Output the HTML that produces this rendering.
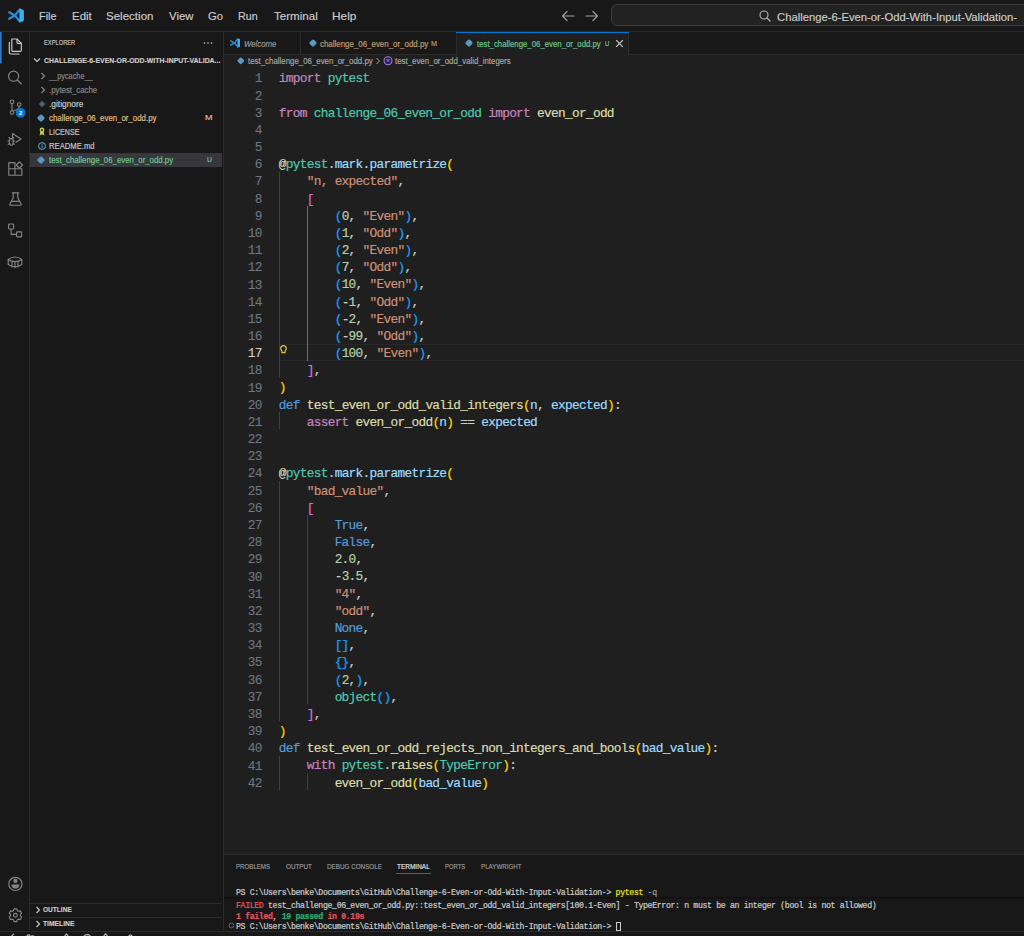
<!DOCTYPE html>
<html><head><meta charset="utf-8"><style>*{margin:0;padding:0;box-sizing:border-box}
html,body{width:1024px;height:936px;overflow:hidden;background:#181818;font-family:"Liberation Sans",sans-serif;color:#cccccc}
.a{position:absolute}
.box{position:absolute}
.t{position:absolute;white-space:pre;transform-origin:0 50%;-webkit-text-stroke:0.15px}
.code{position:absolute;left:278.8px;-webkit-text-stroke:0.2px;font-family:"Liberation Mono",monospace;font-size:12.8px;letter-spacing:-0.70px;margin-top:1.6px;line-height:17.18px;height:17.18px;color:#cccccc;white-space:pre}
.ln{position:absolute;left:223px;width:38.7px;text-align:right;font-family:"Liberation Mono",monospace;font-size:12.8px;letter-spacing:-0.70px;margin-top:1.7px;-webkit-text-stroke:0.1px;line-height:17.18px;color:#6e7681}
.k{color:#C586C0}.d{color:#569CD6}.m{color:#4EC9B0}.f{color:#DCDCAA}.s{color:#CE9178}.n{color:#B5CEA8}.v{color:#9CDCFE}
.b1{color:#FFD700}.b2{color:#DA70D6}.b3{color:#179FFF}
.guide{position:absolute;width:1px;background:#404040}
.term{position:absolute;left:236px;-webkit-text-stroke:0.2px;font-family:"Liberation Mono",monospace;font-size:8.2px;letter-spacing:-0.34px;line-height:11px;color:#cccccc;white-space:pre}
</style></head><body>
<div class="box" style="left:0;top:0;width:1024px;height:31px;background:#181818"></div>
<div class="box" style="left:0;top:31px;width:1024px;height:1px;background:#2b2b2b"></div>
<svg class="a" style="left:0;top:0" width="32" height="32" viewBox="0 0 32 32"><path d="M9.2 12.3 L14.8 15.5 L19.8 21.3 M9.2 18.7 L14.8 15.5 L19.8 9.6" fill="none" stroke="#2a8ad8" stroke-width="2.3" stroke-linecap="round" stroke-linejoin="round"/><path d="M19.4 8.3 L23.4 10.1 Q23.9 10.4 23.9 11 V20 Q23.9 20.6 23.4 20.9 L19.4 22.7 Z" fill="#3cb0f0"/></svg>
<svg class="a" style="left:556px;top:8px" width="48" height="16" viewBox="0 0 48 16"><path d="M18 8 H6.5 M11 3.5 L6.5 8 L11 12.5 M30 8 H41.5 M37 3.5 L41.5 8 L37 12.5" fill="none" stroke="#9d9d9d" stroke-width="1.2" stroke-linecap="round" stroke-linejoin="round"/></svg>
<div class="box" style="left:611px;top:4px;width:440px;height:22px;border:1px solid #3c3c3c;border-radius:6px;background:#222222"></div>
<svg class="a" style="left:758px;top:9px" width="14" height="14" viewBox="0 0 14 14"><circle cx="6" cy="6" r="4" fill="none" stroke="#bbbbbb" stroke-width="1.1"/><path d="M8.9 8.9 L12 12" stroke="#bbbbbb" stroke-width="1.2" stroke-linecap="round"/></svg>
<div class="box" style="left:29px;top:32px;width:1px;height:898px;background:#2b2b2b"></div>
<svg class="a" style="left:0;top:0" width="30" height="936" viewBox="0 0 30 936">
<rect x="0" y="32" width="1.6" height="31.5" fill="#2f7fc8"/>
<path d="M11.8 39 H17 L21.3 43.3 V50.5 Q21.3 51.4 20.4 51.4 H12.7 Q11.8 51.4 11.8 50.5 Z" fill="none" stroke="#cccccc" stroke-width="1.15" stroke-linejoin="round" stroke-linecap="round"/>
<path d="M17 39.2 V42.5 Q17 43.3 17.8 43.3 H21.1" fill="none" stroke="#cccccc" stroke-width="1.15" stroke-linejoin="round" stroke-linecap="round"/>
<path d="M9.3 42.3 V52.5 Q9.3 54 10.8 54 H19.2" fill="none" stroke="#cccccc" stroke-width="1.15" stroke-linejoin="round" stroke-linecap="round"/>
<circle cx="13.6" cy="76.2" r="5.1" fill="none" stroke="#858585" stroke-width="1.15" stroke-linejoin="round" stroke-linecap="round"/>
<path d="M17.3 80 L21.4 84" fill="none" stroke="#858585" stroke-width="1.15" stroke-linejoin="round" stroke-linecap="round"/>
<circle cx="12" cy="101.8" r="1.8" fill="none" stroke="#858585" stroke-width="1.15" stroke-linejoin="round" stroke-linecap="round"/>
<circle cx="12" cy="112.6" r="1.8" fill="none" stroke="#858585" stroke-width="1.15" stroke-linejoin="round" stroke-linecap="round"/>
<circle cx="19.2" cy="104.6" r="1.8" fill="none" stroke="#858585" stroke-width="1.15" stroke-linejoin="round" stroke-linecap="round"/>
<path d="M12 103.6 V110.8 M19.2 106.4 Q19.2 109.5 13.6 110.5" fill="none" stroke="#858585" stroke-width="1.15" stroke-linejoin="round" stroke-linecap="round"/>
<circle cx="20.6" cy="112.8" r="4.9" fill="#0078d4"/>
<text x="20.7" y="115" font-family="Liberation Sans" font-size="6" font-weight="bold" fill="#ffffff" text-anchor="middle">2</text>
<path d="M12.5 133.5 V137.5 M12.5 133.5 L21 139 L16 142.3" fill="none" stroke="#858585" stroke-width="1.15" stroke-linejoin="round" stroke-linecap="round"/>
<path d="M9.5 140.2 Q9.5 138.6 11.3 138.6 Q13.1 138.6 13.1 140.2 V143 Q13.1 145.2 11.3 145.2 Q9.5 145.2 9.5 143 Z" fill="none" stroke="#858585" stroke-width="1.15" stroke-linejoin="round" stroke-linecap="round"/>
<path d="M8 141 H9.5 M13.1 141 H14.6 M8.2 144.2 L9.6 143.4 M14.4 144.2 L13 143.4 M9.8 138.6 L9 137.4 M12.8 138.6 L13.6 137.4" fill="none" stroke="#858585" stroke-width="1.15" stroke-linejoin="round" stroke-linecap="round"/>
<path d="M8.8 162.6 H14.9 V168.7 H21.8 V175.2 H8.8 Z M14.9 168.7 H8.8 M14.9 168.7 V175.2" fill="none" stroke="#858585" stroke-width="1.15" stroke-linejoin="round" stroke-linecap="round"/>
<path d="M19.4 161.8 L22.6 165 L19.4 168.2 L16.2 165 Z" fill="none" stroke="#858585" stroke-width="1.15" stroke-linejoin="round" stroke-linecap="round"/>
<path d="M12.2 192.8 H18.8 M13.2 192.8 V197.8 L9.9 204 Q9.5 205.2 10.8 205.2 H20.2 Q21.5 205.2 21.1 204 L17.8 197.8 V192.8 M11.4 201.3 H19.6" fill="none" stroke="#858585" stroke-width="1.15" stroke-linejoin="round" stroke-linecap="round"/>
<rect x="8.6" y="224" width="5" height="5" rx="0.8" fill="none" stroke="#858585" stroke-width="1.15" stroke-linejoin="round" stroke-linecap="round"/>
<rect x="16.6" y="231.9" width="5" height="5" rx="0.8" fill="none" stroke="#858585" stroke-width="1.15" stroke-linejoin="round" stroke-linecap="round"/>
<path d="M11.1 229 V234.4 H16.6" fill="none" stroke="#858585" stroke-width="1.15" stroke-linejoin="round" stroke-linecap="round"/>
<path d="M8.2 259.4 Q15 254.6 21.8 259.4 V264.6 Q15 269.2 8.2 264.6 Z M8.2 259.4 Q15 263.6 21.8 259.4 M12 261.6 V267 M15 262.2 V267.7 M18 261.6 V267" fill="none" stroke="#858585" stroke-width="1.15" stroke-linejoin="round" stroke-linecap="round"/>
<circle cx="15.4" cy="883.9" r="6.6" fill="none" stroke="#858585" stroke-width="1.15" stroke-linejoin="round" stroke-linecap="round"/>
<circle cx="15.4" cy="880.9" r="2.1" fill="#858585"/>
<path d="M11.4 884.6 H19.4 Q19.2 888.6 15.4 888.8 Q11.6 888.6 11.4 884.6 Z" fill="#858585"/>
<path d="M13.41 910.72 L14.05 908.84 L16.75 908.84 L17.39 910.72 L18.28 911.24 L20.23 910.85 L21.58 913.19 L20.27 914.69 L20.27 915.71 L21.58 917.21 L20.23 919.55 L18.28 919.16 L17.39 919.68 L16.75 921.56 L14.05 921.56 L13.41 919.68 L12.52 919.16 L10.57 919.55 L9.22 917.21 L10.53 915.71 L10.53 914.69 L9.22 913.19 L10.57 910.85 L12.52 911.24 Z" fill="none" stroke="#858585" stroke-width="1.15" stroke-linejoin="round" stroke-linecap="round"/>
<circle cx="15.4" cy="915.2" r="1.9" fill="none" stroke="#858585" stroke-width="1.15" stroke-linejoin="round" stroke-linecap="round"/>
</svg>
<div class="box" style="left:223px;top:32px;width:1px;height:898px;background:#2b2b2b"></div>
<svg class="a" style="left:202px;top:40px" width="12" height="6" viewBox="0 0 12 6"><circle cx="2.5" cy="3" r="0.8" fill="#cccccc"/><circle cx="6" cy="3" r="0.8" fill="#cccccc"/><circle cx="9.5" cy="3" r="0.8" fill="#cccccc"/></svg>
<svg class="a" style="left:33.0px;top:56.3px" width="8" height="8" viewBox="0 0 8 8"><path d="M1 2.5 L4 5.5 L7 2.5" fill="none" stroke="#cccccc" stroke-width="1.1"/></svg>
<div class="box" style="left:30px;top:152.72px;width:192px;height:14.05px;background:#37373d"></div>
<svg class="a" style="left:39.4px;top:71.5px" width="8" height="8" viewBox="0 0 8 8"><path d="M2.5 1 L5.5 4 L2.5 7" fill="none" stroke="#8c8c8c" stroke-width="1.1"/></svg>
<svg class="a" style="left:39.4px;top:85.5px" width="8" height="8" viewBox="0 0 8 8"><path d="M2.5 1 L5.5 4 L2.5 7" fill="none" stroke="#8c8c8c" stroke-width="1.1"/></svg>
<svg class="a" style="left:37.80px;top:99.55px" width="8" height="8" viewBox="0 0 8 8"><path d="M4 0.5 L7.5 4 L4 7.5 L0.5 4 Z" fill="#41535b"/><path d="M4 2.2 L5.8 4 L4 5.8 L2.2 4 Z" fill="#5b6b72"/></svg>
<svg class="a" style="left:37.30px;top:113.60px" width="8.00" height="8.00" viewBox="0 0 16 16"><path d="M8 0.8 Q9.2 0.8 10.8 2.6 L13.4 5.2 Q15.2 6.8 15.2 8 Q15.2 9.2 13.4 10.8 L10.8 13.4 Q9.2 15.2 8 15.2 Q6.8 15.2 5.2 13.4 L2.6 10.8 Q0.8 9.2 0.8 8 Q0.8 6.8 2.6 5.2 L5.2 2.6 Q6.8 0.8 8 0.8 Z" fill="#5a9cc6"/><circle cx="6" cy="5.6" r="0.9" fill="#2d5670"/><circle cx="10" cy="10.4" r="0.9" fill="#2d5670"/></svg>
<svg class="a" style="left:37.70px;top:127.35px" width="8" height="9" viewBox="0 0 8 9"><circle cx="4" cy="3" r="2.4" fill="#cbcb41"/><path d="M2.4 4.6 L1.6 8.6 L4 7.2 L6.4 8.6 L5.6 4.6" fill="#cbcb41"/><circle cx="4" cy="3" r="1" fill="#181818"/></svg>
<svg class="a" style="left:37.60px;top:141.70px" width="8" height="8" viewBox="0 0 8 8"><circle cx="4" cy="4" r="3.3" fill="none" stroke="#519aba" stroke-width="1.1"/><path d="M4 3.4 V6" stroke="#519aba" stroke-width="1.2"/><circle cx="4" cy="2.2" r="0.6" fill="#519aba"/></svg>
<svg class="a" style="left:37.30px;top:155.75px" width="8.00" height="8.00" viewBox="0 0 16 16"><path d="M8 0.8 Q9.2 0.8 10.8 2.6 L13.4 5.2 Q15.2 6.8 15.2 8 Q15.2 9.2 13.4 10.8 L10.8 13.4 Q9.2 15.2 8 15.2 Q6.8 15.2 5.2 13.4 L2.6 10.8 Q0.8 9.2 0.8 8 Q0.8 6.8 2.6 5.2 L5.2 2.6 Q6.8 0.8 8 0.8 Z" fill="#5a9cc6"/><circle cx="6" cy="5.6" r="0.9" fill="#2d5670"/><circle cx="10" cy="10.4" r="0.9" fill="#2d5670"/></svg>
<div class="box" style="left:30px;top:903px;width:192px;height:1px;background:#2b2b2b"></div>
<div class="box" style="left:30px;top:917px;width:192px;height:1px;background:#2b2b2b"></div>
<svg class="a" style="left:33.6px;top:906.0px" width="8" height="8" viewBox="0 0 8 8"><path d="M2.5 1 L5.5 4 L2.5 7" fill="none" stroke="#cccccc" stroke-width="1.1"/></svg>
<svg class="a" style="left:33.6px;top:920.0px" width="8" height="8" viewBox="0 0 8 8"><path d="M2.5 1 L5.5 4 L2.5 7" fill="none" stroke="#cccccc" stroke-width="1.1"/></svg>
<div class="box" style="left:224px;top:32px;width:800px;height:822px;background:#1f1f1f"></div>
<div class="box" style="left:224px;top:32px;width:800px;height:23px;background:#181818"></div>
<div class="box" style="left:224px;top:54px;width:800px;height:1px;background:#2b2b2b"></div>
<div class="box" style="left:300px;top:32px;width:1px;height:22px;background:#2b2b2b"></div>
<div class="box" style="left:456px;top:32px;width:173px;height:23px;background:#1f1f1f;border-left:1px solid #2b2b2b;border-right:1px solid #2b2b2b"></div>
<div class="box" style="left:456px;top:32px;width:173px;height:1px;background:#0078d4"></div>
<svg class="a" style="left:229.5px;top:38px" width="10.5" height="10.5" viewBox="8 8 16 16"><path d="M9.2 12.3 L14.8 15.5 L19.8 21.3 M9.2 18.7 L14.8 15.5 L19.8 9.6" fill="none" stroke="#2a8ad8" stroke-width="2.3" stroke-linecap="round" stroke-linejoin="round"/><path d="M19.4 8.3 L23.4 10.1 Q23.9 10.4 23.9 11 V20 Q23.9 20.6 23.4 20.9 L19.4 22.7 Z" fill="#3cb0f0"/></svg>
<svg class="a" style="left:309.00px;top:39.00px" width="8.00" height="8.00" viewBox="0 0 16 16"><path d="M8 0.8 Q9.2 0.8 10.8 2.6 L13.4 5.2 Q15.2 6.8 15.2 8 Q15.2 9.2 13.4 10.8 L10.8 13.4 Q9.2 15.2 8 15.2 Q6.8 15.2 5.2 13.4 L2.6 10.8 Q0.8 9.2 0.8 8 Q0.8 6.8 2.6 5.2 L5.2 2.6 Q6.8 0.8 8 0.8 Z" fill="#5a9cc6"/><circle cx="6" cy="5.6" r="0.9" fill="#2d5670"/><circle cx="10" cy="10.4" r="0.9" fill="#2d5670"/></svg>
<svg class="a" style="left:465.00px;top:39.00px" width="8.00" height="8.00" viewBox="0 0 16 16"><path d="M8 0.8 Q9.2 0.8 10.8 2.6 L13.4 5.2 Q15.2 6.8 15.2 8 Q15.2 9.2 13.4 10.8 L10.8 13.4 Q9.2 15.2 8 15.2 Q6.8 15.2 5.2 13.4 L2.6 10.8 Q0.8 9.2 0.8 8 Q0.8 6.8 2.6 5.2 L5.2 2.6 Q6.8 0.8 8 0.8 Z" fill="#5a9cc6"/><circle cx="6" cy="5.6" r="0.9" fill="#2d5670"/><circle cx="10" cy="10.4" r="0.9" fill="#2d5670"/></svg>
<svg class="a" style="left:615px;top:38.5px" width="9" height="9" viewBox="0 0 9 9"><path d="M1.2 1.2 L7.8 7.8 M7.8 1.2 L1.2 7.8" stroke="#cccccc" stroke-width="1.2"/></svg>
<svg class="a" style="left:236.60px;top:57.00px" width="7.60" height="7.60" viewBox="0 0 16 16"><path d="M8 0.8 Q9.2 0.8 10.8 2.6 L13.4 5.2 Q15.2 6.8 15.2 8 Q15.2 9.2 13.4 10.8 L10.8 13.4 Q9.2 15.2 8 15.2 Q6.8 15.2 5.2 13.4 L2.6 10.8 Q0.8 9.2 0.8 8 Q0.8 6.8 2.6 5.2 L5.2 2.6 Q6.8 0.8 8 0.8 Z" fill="#5a9cc6"/><circle cx="6" cy="5.6" r="0.9" fill="#2d5670"/><circle cx="10" cy="10.4" r="0.9" fill="#2d5670"/></svg>
<svg class="a" style="left:375px;top:57px" width="6" height="8" viewBox="0 0 6 8"><path d="M1.5 1 L4.5 4 L1.5 7" fill="none" stroke="#a9a9a9" stroke-width="1"/></svg>
<svg class="a" style="left:383px;top:56.3px" width="10" height="10" viewBox="0 0 10 10"><circle cx="5" cy="4.7" r="4" fill="#2e1f5e" stroke="#a07ad0" stroke-width="1.1"/><path d="M3.2 3.3 H6.8 L5 6.6 Z" fill="#8a6cc0"/></svg>
<div class="a" style="left:279px;top:343.54px;width:745px;height:17.18px;border:1px solid #282828;border-right:none"></div>
<div class="guide" style="left:278.80px;top:171.74px;height:206.16px;"></div>
<div class="guide" style="left:306.72px;top:206.10px;height:154.62px;background:#707070"></div>
<div class="guide" style="left:278.80px;top:412.26px;height:17.18px;"></div>
<div class="guide" style="left:278.80px;top:480.98px;height:240.52px;"></div>
<div class="guide" style="left:306.72px;top:515.34px;height:188.98px;"></div>
<div class="guide" style="left:278.80px;top:755.86px;height:34.36px;"></div>
<div class="guide" style="left:306.72px;top:773.04px;height:17.18px;"></div>
<div class="ln" style="top:68.66px;color:#6e7681">1</div>
<div class="code" style="top:68.66px"><span class="k">import</span> <span class="m">pytest</span></div>
<div class="ln" style="top:85.84px;color:#6e7681">2</div>
<div class="ln" style="top:103.02px;color:#6e7681">3</div>
<div class="code" style="top:103.02px"><span class="k">from</span> <span class="m">challenge_06_even_or_odd</span> <span class="k">import</span> <span class="f">even_or_odd</span></div>
<div class="ln" style="top:120.20px;color:#6e7681">4</div>
<div class="ln" style="top:137.38px;color:#6e7681">5</div>
<div class="ln" style="top:154.56px;color:#6e7681">6</div>
<div class="code" style="top:154.56px"><span class="f">@</span><span class="m">pytest</span>.<span class="v">mark</span>.<span class="v">parametrize</span><span class="b1">(</span></div>
<div class="ln" style="top:171.74px;color:#6e7681">7</div>
<div class="code" style="top:171.74px">    <span class="s">"n, expected"</span>,</div>
<div class="ln" style="top:188.92px;color:#6e7681">8</div>
<div class="code" style="top:188.92px">    <span class="b2">[</span></div>
<div class="ln" style="top:206.10px;color:#6e7681">9</div>
<div class="code" style="top:206.10px">        <span class="b3">(</span><span class="n">0</span>, <span class="s">"Even"</span><span class="b3">)</span>,</div>
<div class="ln" style="top:223.28px;color:#6e7681">10</div>
<div class="code" style="top:223.28px">        <span class="b3">(</span><span class="n">1</span>, <span class="s">"Odd"</span><span class="b3">)</span>,</div>
<div class="ln" style="top:240.46px;color:#6e7681">11</div>
<div class="code" style="top:240.46px">        <span class="b3">(</span><span class="n">2</span>, <span class="s">"Even"</span><span class="b3">)</span>,</div>
<div class="ln" style="top:257.64px;color:#6e7681">12</div>
<div class="code" style="top:257.64px">        <span class="b3">(</span><span class="n">7</span>, <span class="s">"Odd"</span><span class="b3">)</span>,</div>
<div class="ln" style="top:274.82px;color:#6e7681">13</div>
<div class="code" style="top:274.82px">        <span class="b3">(</span><span class="n">10</span>, <span class="s">"Even"</span><span class="b3">)</span>,</div>
<div class="ln" style="top:292.00px;color:#6e7681">14</div>
<div class="code" style="top:292.00px">        <span class="b3">(</span>-<span class="n">1</span>, <span class="s">"Odd"</span><span class="b3">)</span>,</div>
<div class="ln" style="top:309.18px;color:#6e7681">15</div>
<div class="code" style="top:309.18px">        <span class="b3">(</span>-<span class="n">2</span>, <span class="s">"Even"</span><span class="b3">)</span>,</div>
<div class="ln" style="top:326.36px;color:#6e7681">16</div>
<div class="code" style="top:326.36px">        <span class="b3">(</span>-<span class="n">99</span>, <span class="s">"Odd"</span><span class="b3">)</span>,</div>
<div class="ln" style="top:343.54px;color:#cccccc">17</div>
<div class="code" style="top:343.54px">        <span class="b3">(</span><span class="n">100</span>, <span class="s">"Even"</span><span class="b3">)</span>,</div>
<div class="ln" style="top:360.72px;color:#6e7681">18</div>
<div class="code" style="top:360.72px">    <span class="b2">]</span>,</div>
<div class="ln" style="top:377.90px;color:#6e7681">19</div>
<div class="code" style="top:377.90px"><span class="b1">)</span></div>
<div class="ln" style="top:395.08px;color:#6e7681">20</div>
<div class="code" style="top:395.08px"><span class="d">def</span> <span class="f">test_even_or_odd_valid_integers</span><span class="b1">(</span><span class="v">n</span>, <span class="v">expected</span><span class="b1">)</span>:</div>
<div class="ln" style="top:412.26px;color:#6e7681">21</div>
<div class="code" style="top:412.26px">    <span class="k">assert</span> <span class="f">even_or_odd</span><span class="b1">(</span><span class="v">n</span><span class="b1">)</span> == <span class="v">expected</span></div>
<div class="ln" style="top:429.44px;color:#6e7681">22</div>
<div class="ln" style="top:446.62px;color:#6e7681">23</div>
<div class="ln" style="top:463.80px;color:#6e7681">24</div>
<div class="code" style="top:463.80px"><span class="f">@</span><span class="m">pytest</span>.<span class="v">mark</span>.<span class="v">parametrize</span><span class="b1">(</span></div>
<div class="ln" style="top:480.98px;color:#6e7681">25</div>
<div class="code" style="top:480.98px">    <span class="s">"bad_value"</span>,</div>
<div class="ln" style="top:498.16px;color:#6e7681">26</div>
<div class="code" style="top:498.16px">    <span class="b2">[</span></div>
<div class="ln" style="top:515.34px;color:#6e7681">27</div>
<div class="code" style="top:515.34px">        <span class="d">True</span>,</div>
<div class="ln" style="top:532.52px;color:#6e7681">28</div>
<div class="code" style="top:532.52px">        <span class="d">False</span>,</div>
<div class="ln" style="top:549.70px;color:#6e7681">29</div>
<div class="code" style="top:549.70px">        <span class="n">2.0</span>,</div>
<div class="ln" style="top:566.88px;color:#6e7681">30</div>
<div class="code" style="top:566.88px">        -<span class="n">3.5</span>,</div>
<div class="ln" style="top:584.06px;color:#6e7681">31</div>
<div class="code" style="top:584.06px">        <span class="s">"4"</span>,</div>
<div class="ln" style="top:601.24px;color:#6e7681">32</div>
<div class="code" style="top:601.24px">        <span class="s">"odd"</span>,</div>
<div class="ln" style="top:618.42px;color:#6e7681">33</div>
<div class="code" style="top:618.42px">        <span class="d">None</span>,</div>
<div class="ln" style="top:635.60px;color:#6e7681">34</div>
<div class="code" style="top:635.60px">        <span class="b3">[]</span>,</div>
<div class="ln" style="top:652.78px;color:#6e7681">35</div>
<div class="code" style="top:652.78px">        <span class="b3">{}</span>,</div>
<div class="ln" style="top:669.96px;color:#6e7681">36</div>
<div class="code" style="top:669.96px">        <span class="b3">(</span><span class="n">2</span>,<span class="b3">)</span>,</div>
<div class="ln" style="top:687.14px;color:#6e7681">37</div>
<div class="code" style="top:687.14px">        <span class="m">object</span><span class="b3">()</span>,</div>
<div class="ln" style="top:704.32px;color:#6e7681">38</div>
<div class="code" style="top:704.32px">    <span class="b2">]</span>,</div>
<div class="ln" style="top:721.50px;color:#6e7681">39</div>
<div class="code" style="top:721.50px"><span class="b1">)</span></div>
<div class="ln" style="top:738.68px;color:#6e7681">40</div>
<div class="code" style="top:738.68px"><span class="d">def</span> <span class="f">test_even_or_odd_rejects_non_integers_and_bools</span><span class="b1">(</span><span class="v">bad_value</span><span class="b1">)</span>:</div>
<div class="ln" style="top:755.86px;color:#6e7681">41</div>
<div class="code" style="top:755.86px">    <span class="k">with</span> <span class="m">pytest</span>.<span class="f">raises</span><span class="b1">(</span><span class="m">TypeError</span><span class="b1">)</span>:</div>
<div class="ln" style="top:773.04px;color:#6e7681">42</div>
<div class="code" style="top:773.04px">        <span class="f">even_or_odd</span><span class="b1">(</span><span class="v">bad_value</span><span class="b1">)</span></div>
<svg class="a" style="left:280px;top:344.5px" width="7" height="9" viewBox="0 0 7 9"><path d="M3.5 0.7 C1.7 0.7 0.7 2 0.7 3.4 C0.7 4.6 1.6 5.3 2 6.2 V7.6 H5 V6.2 C5.4 5.3 6.3 4.6 6.3 3.4 C6.3 2 5.3 0.7 3.5 0.7 Z" fill="none" stroke="#e2c541" stroke-width="1.2"/></svg>
<div class="box" style="left:224px;top:854px;width:800px;height:76px;background:#181818;border-top:1px solid #2b2b2b"></div>
<div class="box" style="left:395.6px;top:872.5px;width:35.6px;height:1px;background:#0078d4"></div>
<div class="box" style="left:224px;top:897px;width:800px;height:1px;background:#101010"></div>
<div class="box" style="left:224px;top:898px;width:800px;height:2px;background:linear-gradient(#141414,#181818)"></div>
<div class="term" style="top:886.80px"><span style="color:#cccccc;">PS C:\Users\benke\Documents\GitHub\Challenge-6-Even-or-Odd-With-Input-Validation-&gt; </span><span style="color:#e5e510;">pytest</span><span style="color:#9d9d9d;"> -q</span></div>
<div class="term" style="top:899.50px"><span style="color:#e8555f;">FAILED</span><span style="color:#cccccc;"> test_challenge_06_even_or_odd.py::test_even_or_odd_valid_integers[100.1-Even] - TypeError: n must be an integer (bool is not allowed)</span></div>
<div class="term" style="top:911.10px"><span style="color:#e8555f;font-weight:bold">1 failed</span><span style="color:#cccccc;">, </span><span style="color:#2fae73;font-weight:bold">19 passed</span><span style="color:#e8555f;font-weight:bold"> in 0.19s</span></div>
<div class="term" style="top:921.10px"><span style="color:#cccccc;">PS C:\Users\benke\Documents\GitHub\Challenge-6-Even-or-Odd-With-Input-Validation-&gt; </span></div>
<div class="box" style="left:616.14px;top:922px;width:5px;height:9px;border:1px solid #cccccc"></div>
<svg class="a" style="left:227.5px;top:921.8px" width="7" height="7" viewBox="0 0 7 7"><circle cx="3.5" cy="3.5" r="2.4" fill="none" stroke="#6b6b6b" stroke-width="1"/></svg>
<div class="box" style="left:0;top:931px;width:1024px;height:5px;background:#181818;border-top:1px solid #2b2b2b"></div>
<svg class="a" style="left:0;top:926px" width="200" height="10" viewBox="0 926 200 10"><g fill="none" stroke="#bdbdbd" stroke-width="1.1"><path d="M14 933.6 L11.2 936.4"/><circle cx="28.6" cy="936.6" r="1.7"/><circle cx="32.6" cy="937.6" r="1.7"/><path d="M63.6 937.5 L66.4 933.8 L69.2 937.5"/><circle cx="87.2" cy="938.6" r="4"/><path d="M102.6 937.5 L105.6 933.6 L108.6 937.5"/><path d="M128.4 936.6 Q130.4 933.2 132.4 936.6"/></g></svg>
<div class="t" style="left:39.20px;top:8.10px;line-height:16px;font-size:11.40px;color:#cccccc;font-weight:normal;font-style:normal;font-family:'Liberation Sans';transform:scaleX(0.9527)">File</div>
<div class="t" style="left:71.70px;top:8.10px;line-height:16px;font-size:11.40px;color:#cccccc;font-weight:normal;font-style:normal;font-family:'Liberation Sans';transform:scaleX(1.0054)">Edit</div>
<div class="t" style="left:106.45px;top:8.10px;line-height:16px;font-size:11.40px;color:#cccccc;font-weight:normal;font-style:normal;font-family:'Liberation Sans';transform:scaleX(1.0129)">Selection</div>
<div class="t" style="left:168.95px;top:8.10px;line-height:16px;font-size:11.40px;color:#cccccc;font-weight:normal;font-style:normal;font-family:'Liberation Sans';transform:scaleX(0.9999)">View</div>
<div class="t" style="left:208.45px;top:8.10px;line-height:16px;font-size:11.40px;color:#cccccc;font-weight:normal;font-style:normal;font-family:'Liberation Sans';transform:scaleX(0.9864)">Go</div>
<div class="t" style="left:238.45px;top:8.10px;line-height:16px;font-size:11.40px;color:#cccccc;font-weight:normal;font-style:normal;font-family:'Liberation Sans';transform:scaleX(0.9444)">Run</div>
<div class="t" style="left:273.70px;top:8.10px;line-height:16px;font-size:11.40px;color:#cccccc;font-weight:normal;font-style:normal;font-family:'Liberation Sans';transform:scaleX(1.0156)">Terminal</div>
<div class="t" style="left:332.45px;top:8.10px;line-height:16px;font-size:11.40px;color:#cccccc;font-weight:normal;font-style:normal;font-family:'Liberation Sans';transform:scaleX(1.0450)">Help</div>
<div class="t" style="left:776.70px;top:8.50px;line-height:16px;font-size:11.00px;color:#cccccc;font-weight:normal;font-style:normal;font-family:'Liberation Sans';transform:scaleX(1.0232)">Challenge-6-Even-or-Odd-With-Input-Validation-</div>
<div class="t" style="left:43.60px;top:37.20px;line-height:12px;font-size:7.70px;color:#cccccc;font-weight:normal;font-style:normal;font-family:'Liberation Sans';transform:scaleX(0.7464)">EXPLORER</div>
<div class="t" style="left:43.60px;top:55.20px;line-height:12px;font-size:6.90px;color:#cccccc;font-weight:bold;font-style:normal;font-family:'Liberation Sans';transform:scaleX(1.0023)">CHALLENGE-6-EVEN-OR-ODD-WITH-INPUT-VALIDA...</div>
<div class="t" style="left:48.95px;top:69.05px;line-height:14px;font-size:8.40px;color:#8c8c8c;font-weight:normal;font-style:normal;font-family:'Liberation Sans';transform:scaleX(0.8755)">__pycache__</div>
<div class="t" style="left:48.95px;top:83.10px;line-height:14px;font-size:8.40px;color:#8c8c8c;font-weight:normal;font-style:normal;font-family:'Liberation Sans';transform:scaleX(0.9309)">.pytest_cache</div>
<div class="t" style="left:48.95px;top:97.15px;line-height:14px;font-size:8.40px;color:#cccccc;font-weight:normal;font-style:normal;font-family:'Liberation Sans';transform:scaleX(0.9984)">.gitignore</div>
<div class="t" style="left:48.95px;top:111.20px;line-height:14px;font-size:8.40px;color:#e2c08d;font-weight:normal;font-style:normal;font-family:'Liberation Sans';transform:scaleX(0.9378)">challenge_06_even_or_odd.py</div>
<div class="t" style="left:204.70px;top:111.20px;line-height:14px;font-size:7.60px;color:#e2c08d;font-weight:normal;font-style:normal;font-family:'Liberation Sans';transform:scaleX(1.1847)">M</div>
<div class="t" style="left:48.95px;top:125.25px;line-height:14px;font-size:8.40px;color:#cccccc;font-weight:normal;font-style:normal;font-family:'Liberation Sans';transform:scaleX(0.8471)">LICENSE</div>
<div class="t" style="left:48.95px;top:139.30px;line-height:14px;font-size:8.40px;color:#cccccc;font-weight:normal;font-style:normal;font-family:'Liberation Sans';transform:scaleX(0.9161)">README.md</div>
<div class="t" style="left:48.95px;top:153.35px;line-height:14px;font-size:8.40px;color:#73c991;font-weight:normal;font-style:normal;font-family:'Liberation Sans';transform:scaleX(0.9353)">test_challenge_06_even_or_odd.py</div>
<div class="t" style="left:207.20px;top:153.35px;line-height:14px;font-size:7.60px;color:#73c991;font-weight:normal;font-style:normal;font-family:'Liberation Sans';transform:scaleX(0.9110)">U</div>
<div class="t" style="left:43.20px;top:904.20px;line-height:12px;font-size:7.20px;color:#cccccc;font-weight:bold;font-style:normal;font-family:'Liberation Sans';transform:scaleX(0.9114)">OUTLINE</div>
<div class="t" style="left:43.20px;top:918.00px;line-height:12px;font-size:7.20px;color:#cccccc;font-weight:bold;font-style:normal;font-family:'Liberation Sans';transform:scaleX(0.9375)">TIMELINE</div>
<div class="t" style="left:244.30px;top:36.80px;line-height:14px;font-size:8.40px;color:#9d9d9d;font-weight:normal;font-style:italic;font-family:'Liberation Sans';transform:scaleX(0.9296)">Welcome</div>
<div class="t" style="left:319.90px;top:36.80px;line-height:14px;font-size:8.40px;color:#e2c08d;font-weight:normal;font-style:normal;font-family:'Liberation Sans';transform:scaleX(0.9452);opacity:0.8">challenge_06_even_or_odd.py</div>
<div class="t" style="left:431.20px;top:36.80px;line-height:14px;font-size:7.60px;color:#e2c08d;font-weight:normal;font-style:normal;font-family:'Liberation Sans';transform:scaleX(0.9635);opacity:0.8">M</div>
<div class="t" style="left:477.00px;top:36.80px;line-height:14px;font-size:8.40px;color:#73c991;font-weight:normal;font-style:normal;font-family:'Liberation Sans';transform:scaleX(0.9323)">test_challenge_06_even_or_odd.py</div>
<div class="t" style="left:605.40px;top:36.80px;line-height:14px;font-size:7.60px;color:#73c991;font-weight:normal;font-style:normal;font-family:'Liberation Sans';transform:scaleX(0.7835)">U</div>
<div class="t" style="left:247.60px;top:55.00px;line-height:12px;font-size:8.40px;color:#a9a9a9;font-weight:normal;font-style:normal;font-family:'Liberation Sans';transform:scaleX(0.9398)">test_challenge_06_even_or_odd.py</div>
<div class="t" style="left:394.70px;top:55.00px;line-height:12px;font-size:8.40px;color:#a9a9a9;font-weight:normal;font-style:normal;font-family:'Liberation Sans';transform:scaleX(0.9373)">test_even_or_odd_valid_integers</div>
<div class="t" style="left:236.10px;top:861.50px;line-height:10px;font-size:7.10px;color:#9d9d9d;font-weight:normal;font-style:normal;font-family:'Liberation Sans';transform:scaleX(0.8643)">PROBLEMS</div>
<div class="t" style="left:285.70px;top:861.50px;line-height:10px;font-size:7.10px;color:#9d9d9d;font-weight:normal;font-style:normal;font-family:'Liberation Sans';transform:scaleX(0.8908)">OUTPUT</div>
<div class="t" style="left:326.70px;top:861.50px;line-height:10px;font-size:7.10px;color:#9d9d9d;font-weight:normal;font-style:normal;font-family:'Liberation Sans';transform:scaleX(0.8879)">DEBUG CONSOLE</div>
<div class="t" style="left:396.60px;top:861.50px;line-height:10px;font-size:7.10px;color:#e7e7e7;font-weight:normal;font-style:normal;font-family:'Liberation Sans';transform:scaleX(0.9137)">TERMINAL</div>
<div class="t" style="left:444.50px;top:861.50px;line-height:10px;font-size:7.10px;color:#9d9d9d;font-weight:normal;font-style:normal;font-family:'Liberation Sans';transform:scaleX(0.8303)">PORTS</div>
<div class="t" style="left:480.50px;top:861.50px;line-height:10px;font-size:7.10px;color:#9d9d9d;font-weight:normal;font-style:normal;font-family:'Liberation Sans';transform:scaleX(0.8747)">PLAYWRIGHT</div>
</body></html>
